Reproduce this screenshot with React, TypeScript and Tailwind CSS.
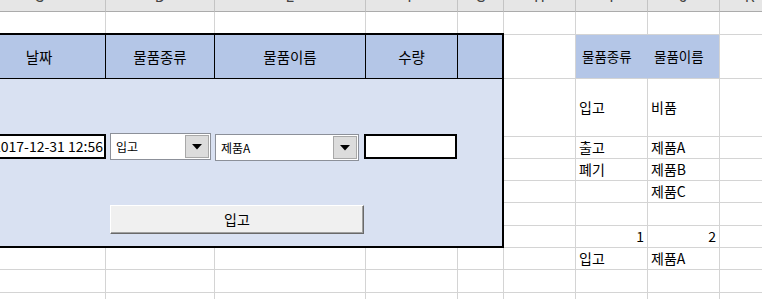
import React from "react";

const FONT = { fontFamily: '"Noto Sans CJK KR", "Noto Sans", sans-serif' };

const letters = ["C", "D", "E", "F", "G", "H", "I", "J", "K"];

// right side sheet data, key = row-col (1-based)
const cells: Record<string, { text: string; right?: boolean; head?: boolean }> = {
  "3-7": { text: "물품종류", head: true },
  "3-8": { text: "물품이름", head: true },
  "4-7": { text: "입고" },
  "4-8": { text: "비품" },
  "5-7": { text: "출고" },
  "5-8": { text: "제품A" },
  "6-7": { text: "폐기" },
  "6-8": { text: "제품B" },
  "7-8": { text: "제품C" },
  "9-7": { text: "1", right: true },
  "9-8": { text: "2", right: true },
  "10-7": { text: "입고" },
  "10-8": { text: "제품A" },
};

function Arrow() {
  return (
    <svg width="10" height="6" viewBox="0 0 10 6">
      <polygon points="0,0 10,0 5,5.5" fill="#000" />
    </svg>
  );
}

function Combo({ value, width }: { value: string; width: string }) {
  return (
    <div className={`flex h-[27px] border border-[#8c9099] bg-white ${width}`}>
      <div className="flex flex-1 items-center pl-[5px] text-[12px] text-black">{value}</div>
      <div className="m-px flex w-[24px] items-center justify-center border border-[#a8a8a8] bg-[#dcdcdc]">
        <Arrow />
      </div>
    </div>
  );
}

export default function App() {
  const rows = Array.from({ length: 12 }, (_, i) => i + 1);

  return (
    <div className="relative h-[299px] w-[762px] overflow-hidden bg-white" style={FONT}>
      <div className="-ml-[27px] grid grid-cols-[133px_109px_151px_92px_46px_72px_72px_72px_60px] grid-rows-[12px_23px_44px_58px_22px_22px_22px_23px_22px_22px_23px_22px]">
        {rows.map((r) =>
          letters.map((l, ci) => {
            const c = ci + 1;
            // cells under the form panel are not drawn
            if (r >= 3 && r <= 9 && c <= 5) return null;
            if (r === 1) {
              return (
                <div
                  key={`${r}-${c}`}
                  className="flex justify-center overflow-hidden border-r border-b border-r-[#c4c4c4] border-b-[#ababab] bg-[#e6e6e6]"
                >
                  <span className="-mt-[14px] text-[15px] leading-[20px] text-[#444]">{l}</span>
                </div>
              );
            }
            const cell = cells[`${r}-${c}`];
            if (cell?.head) {
              return (
                <div
                  key={`${r}-${c}`}
                  className={
                    c === 7
                      ? "flex items-center border-r border-b border-r-[#b4c6e7] border-b-[#d4d4d4] bg-[#b4c6e7] pl-[6px] text-[13.5px] text-black"
                      : "flex items-center border-r border-b border-[#d4d4d4] bg-[#b4c6e7] pl-[6px] text-[13.5px] text-black"
                  }
                >
                  {cell.text}
                </div>
              );
            }
            return (
              <div
                key={`${r}-${c}`}
                className={
                  cell?.right
                    ? "flex items-center justify-end border-r border-b border-[#d4d4d4] pr-[3px] text-[14px] text-black"
                    : "flex items-center border-r border-b border-[#d4d4d4] pl-[3px] text-[14px] text-black"
                }
              >
                {cell?.text}
              </div>
            );
          })
        )}

        {/* input form panel */}
        <div className="z-10 col-span-5 col-start-1 row-span-7 row-start-3 -mt-[2px] flex flex-col border-t-2 border-r-2 border-b-2 border-black">
          <div className="grid h-[44px] grid-cols-[133px_109px_151px_92px_1fr] border-b border-black bg-[#b4c6e7] text-[14.5px] text-black">
            <div className="flex items-center justify-center border-r border-black">날짜</div>
            <div className="flex items-center justify-center border-r border-black">물품종류</div>
            <div className="flex items-center justify-center border-r border-black">물품이름</div>
            <div className="flex items-center justify-center border-r border-black">수량</div>
            <div />
          </div>

          <div className="flex flex-1 flex-col bg-[#d9e1f2] pt-[54px]">
            <div className="flex items-start pl-[4px]">
              <div className="mt-px flex h-[25px] w-[129px] items-center justify-end border-2 border-black bg-white pr-[1px] text-[14px] text-black">
                2017-12-31 12:56
              </div>
              <div className="ml-[4px]">
                <Combo value="입고" width="w-[101px]" />
              </div>
              <div className="ml-[4px] mt-px">
                <Combo value="제품A" width="w-[144px]" />
              </div>
              <div className="ml-[5px] mt-px h-[25px] w-[93px] border-2 border-black bg-white" />
            </div>

            <button className="ml-[137px] mt-[44px] flex h-[29px] w-[254px] items-center justify-center border-t border-l border-r border-b border-t-white border-l-white border-r-[#696969] border-b-[#696969] bg-[#f0f0f0] text-[14px] text-black shadow-[inset_-1px_-1px_0_#a0a0a0]">
              입고
            </button>
          </div>
        </div>
      </div>
    </div>
  );
}
